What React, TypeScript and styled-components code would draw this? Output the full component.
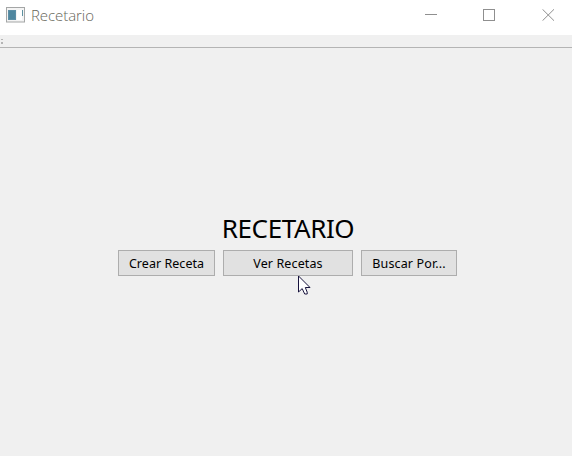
import React from "react";
import styled, { createGlobalStyle } from "styled-components";

const GlobalStyle = createGlobalStyle`
  * { box-sizing: border-box; }
  body { margin: 0; background: #f0f0f0; overflow: hidden; }
`;

const Window = styled.div`
  position: relative;
  display: flex;
  flex-direction: column;
  width: 572px;
  height: 456px;
  background: #f0f0f0;
  color: #000;
  font-family: "Noto Sans", sans-serif;
`;

const TitleBar = styled.header`
  display: flex;
  align-items: flex-start;
  height: 35px;
  flex: none;
  background: #fff;
`;

const AppIcon = styled.svg`
  flex: none;
  margin: 7px 0 0 6px;
`;

const Caption = styled.span`
  flex: 1;
  margin: 5px 0 0 6px;
  font: 300 15px/21px "Open Sans", sans-serif;
  letter-spacing: -0.07px;
  color: #66665a;
`;

const Controls = styled.div`
  display: flex;
  margin: 9px 17px 0 0;
`;

const ControlIcon = styled.svg`
  display: block;
  margin-left: 46px;
  fill: none;
  stroke: #8f8f8f;

  &:last-child {
    margin-left: 47px;
  }
`;

const ToolBar = styled.div`
  height: 13px;
  flex: none;
  padding: 3px 0 0 1px;
  border-bottom: 1px solid #b4b4b4;
`;

const Grip = styled.svg`
  display: block;
`;

const Main = styled.main`
  display: flex;
  flex-direction: column;
  align-items: flex-start;
  padding: 163px 0 0 118px;
`;

const Heading = styled.h1`
  width: 339px;
  height: 39px;
  margin: 0;
  padding-left: 1px;
  font-size: 26px;
  font-weight: 400;
  line-height: 34px;
  letter-spacing: -0.4px;
  text-align: center;
`;

const ButtonRow = styled.div`
  display: flex;
  gap: 8px;
`;

const PushButton = styled.button<{ $width: number; $tracking: number }>`
  width: ${(p) => p.$width}px;
  height: 26px;
  padding: 1px 0 0;
  border: 1px solid #adadad;
  border-radius: 0;
  background: #e1e1e1;
  color: #000;
  font: 12.5px/22px "Noto Sans", sans-serif;
  letter-spacing: ${(p) => p.$tracking}px;
  white-space: nowrap;
`;

const Pointer = styled.svg`
  position: absolute;
  left: 298px;
  top: 275px;
`;

export default function App() {
  return (
    <Window>
      <GlobalStyle />
      <TitleBar>
        <AppIcon width="19" height="16" viewBox="0 0 19 16">
          <rect x="0.5" y="0.5" width="18" height="14.5" fill="#f4f4f4" stroke="#a4a6a6" />
          <rect x="2" y="3" width="8" height="10" fill="#5c8fa6" />
          <rect x="3" y="4" width="6" height="8" fill="#4f879f" />
          <rect x="11" y="3" width="5" height="10" fill="#fff" />
          <rect x="16" y="3" width="1" height="6" fill="#5c91a0" />
        </AppIcon>
        <Caption>Recetario</Caption>
        <Controls>
          <ControlIcon width="12" height="12">
            <path d="M0 5.5H12" />
          </ControlIcon>
          <ControlIcon width="12" height="12">
            <rect x="0.5" y="0.5" width="11" height="11" />
          </ControlIcon>
          <ControlIcon width="13" height="12">
            <path d="M0.5 0.3L12 11.7M12 0.3L0.5 11.7" />
          </ControlIcon>
        </Controls>
      </TitleBar>
      <ToolBar>
        <Grip width="3" height="8" fill="#b4b4b4">
          <rect x="0" y="1" width="2" height="1" />
          <rect x="0" y="4" width="2" height="2" />
        </Grip>
      </ToolBar>
      <Main>
        <Heading>RECETARIO</Heading>
        <ButtonRow>
          <PushButton $width={97} $tracking={0.04}>Crear Receta</PushButton>
          <PushButton $width={130} $tracking={0.12}>Ver Recetas</PushButton>
          <PushButton $width={96} $tracking={0.14}>Buscar Por...</PushButton>
        </ButtonRow>
      </Main>
      <Pointer width="13" height="20" viewBox="0 0 13 20">
        <path
          d="M0.5 1V17L4.2 13.6L6.7 19H9.2V17.2L7.3 12.5H12Z"
          fill="#fff"
          stroke="#17133d"
          strokeWidth="1"
        />
      </Pointer>
    </Window>
  );
}
